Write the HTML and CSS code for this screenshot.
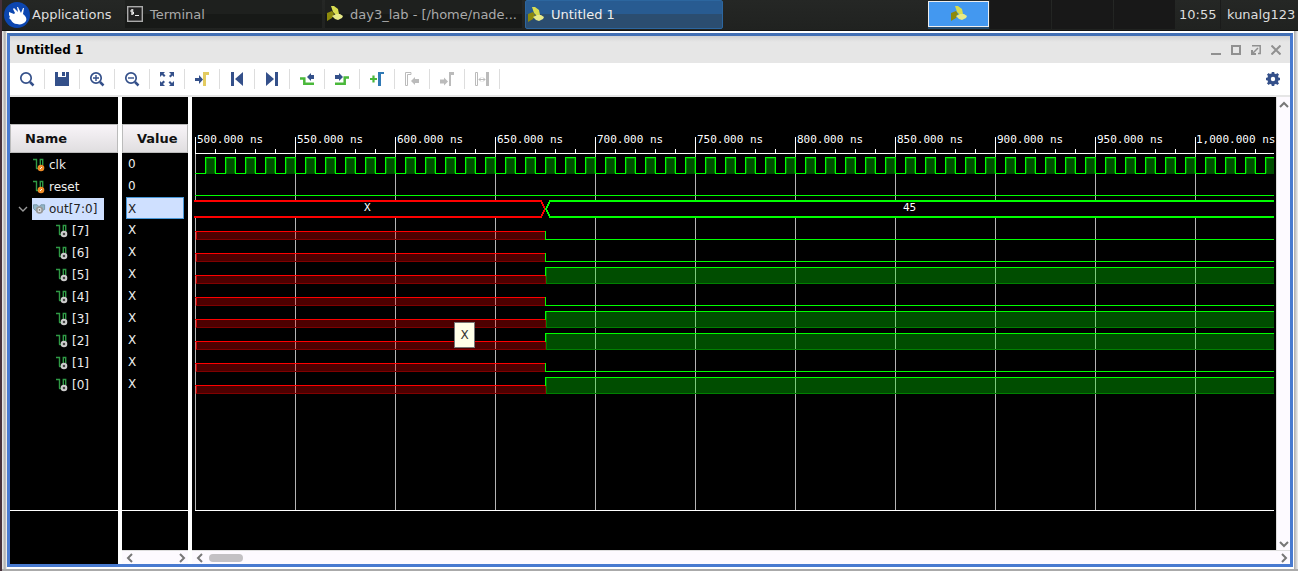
FILE: index.html
```html
<!DOCTYPE html>
<html lang="en">
<head>
<meta charset="utf-8">
<title>Untitled 1</title>
<link rel="stylesheet" href="styles.css">
</head>
<body>
<svg class="defs" aria-hidden="true">
  <symbol id="leaf" viewBox="0 0 16 16">
    <path fill="#d8dc50" d="M4 0h3l4 3 1 5-3 1-3-3z"/>
    <path fill="#8d8a0c" d="M0 7l5-2 2 3-2 4-5 3z"/>
    <path fill="#e8ea88" d="M5 10l4-2 4 0 3 2-1 2-4 2-3-1z"/>
  </symbol>
  <symbol id="bit" viewBox="0 0 12 14">
    <path fill="none" stroke="#2f9a45" stroke-width="1.400" d="M0 1.500h3.500v9M7.300 8V1.500h2.400V7"/>
    <path fill="none" stroke="#2f9a45" stroke-width="1.400" d="M3 10.500h4"/>
  </symbol>
  <symbol id="lens" viewBox="0 0 16 16">
    <circle cx="7" cy="7" r="5.200" fill="none" stroke="currentColor" stroke-width="1.700"/>
    <path d="M11 11l3.500 3.500" stroke="currentColor" stroke-width="2.500"/>
  </symbol>
</svg>

<header class="taskbar">
  <button class="apps">
    <svg class="mouse" viewBox="0 0 26 26"><circle cx="13" cy="13" r="13" fill="#0c46b0"/><path fill="#fff" d="M5 10l5 2 1-1-2-4 1-1 4 4-1-5h1l3 6 2-5h1l-1 6c3 2 4 5 3 7-2 3-6 4-9 3-3 0-5-2-6-4l-2-2 1-1-1-2z"/></svg>
    <span>Applications</span>
  </button>
  <button class="task"><svg class="term" viewBox="0 0 16 16"><rect x=".7" y=".7" width="14.600" height="14.600" fill="#222" stroke="#aaa" stroke-width="1.400"/><path d="M6.500 4H4v2h2.500v2H4M5.200 3v6M8 9.500h4" fill="none" stroke="#eee" stroke-width="1"/></svg><span>Terminal</span></button>
  <button class="task"><svg class="leaf"><use href="#leaf"/></svg><span>day3_lab - [/home/nade...</span></button>
  <button class="task current"><svg class="leaf"><use href="#leaf"/></svg><span>Untitled 1</span></button>
  <nav class="pager" aria-label="Workspaces">
    <button class="desk on" aria-label="Workspace 1"><svg class="leaf"><use href="#leaf"/></svg></button>
    <button class="desk" aria-label="Workspace 2"></button>
    <button class="desk" aria-label="Workspace 3"></button>
    <button class="desk" aria-label="Workspace 4"></button>
  </nav>
  <time class="clock">10:55</time>
  <span class="user">kunalg123</span>
</header>

<main class="frame">
  <section class="window">
    <div class="titlebar">
      <h1>Untitled 1</h1>
      <button aria-label="Minimize"><svg viewBox="0 0 10 10"><path d="M0 9h10"/></svg></button>
      <button aria-label="Maximize"><svg viewBox="0 0 10 10"><path d="M1 1h8v8H1z"/></svg></button>
      <button aria-label="Float"><svg viewBox="0 0 10 10"><path stroke-width="1.500" d="M1 .8h8.200V8.500H7M7 3L2 8"/><path stroke-width="2" d="M1 5v4h4"/></svg></button>
      <button aria-label="Close"><svg viewBox="0 0 10 10"><path d="M.5.5l9 9M9.500.5l-9 9"/></svg></button>
    </div>

    <div class="toolbar">
      <button aria-label="Find"><svg viewBox="0 0 16 16"><use href="#lens"/></svg></button>
      <button aria-label="Save"><svg viewBox="0 0 16 16"><path fill="currentColor" d="M1 1h3v5h8V1h3v14H1zM8 1h3v4H8z"/></svg></button>
      <button aria-label="Zoom in"><svg viewBox="0 0 16 16"><use href="#lens"/><path d="M4 7h6M7 4v6" stroke="currentColor" stroke-width="1.400"/></svg></button>
      <button aria-label="Zoom out"><svg viewBox="0 0 16 16"><use href="#lens"/><path d="M4 7h6" stroke="currentColor" stroke-width="1.400"/></svg></button>
      <button aria-label="Zoom fit"><svg viewBox="0 0 16 16"><path fill="currentColor" d="M1 1h5L4.500 2.500l2 2-1.500 1.500-2-2L1 6zM15 1v5l-1.500-1.500-2 2L10 5l2-2L10 1zM1 15v-5l1.500 1.500 2-2L6 11l-2 2L6 15zM15 15h-5l1.500-1.500-2-2L11 10l2 2L15 10z"/></svg></button>
      <button aria-label="Go to cursor"><svg viewBox="0 0 16 16"><path fill="#34508a" d="M1 7h4V4l4 4.500L5 13v-3H1z"/><path fill="#e3cb60" d="M9 1h6v3h-3v11H9z"/></svg></button>
      <button aria-label="Go to start"><svg viewBox="0 0 16 16"><path fill="currentColor" d="M2 1h3v14H2zM14 1v14L6 8z"/></svg></button>
      <button aria-label="Go to end"><svg viewBox="0 0 16 16"><path fill="currentColor" d="M11 1h3v14h-3zM2 1v14l8-7z"/></svg></button>
      <button aria-label="Previous transition"><svg viewBox="0 0 16 16"><path fill="none" stroke="#4ab83a" stroke-width="2.500" d="M1 7.500h4.300v5.200H15"/><path fill="#34508a" d="M15 4v4h-3v2L8 6l4-4v2z"/></svg></button>
      <button aria-label="Next transition"><svg viewBox="0 0 16 16"><path fill="none" stroke="#4ab83a" stroke-width="2.500" d="M1 12.700h9.700V6.500H15"/><path fill="#34508a" d="M1 4h4V2l4 4-4 4V8H1z"/></svg></button>
      <button aria-label="Add marker"><svg viewBox="0 0 16 16"><path stroke="#4ab83a" stroke-width="2.200" d="M1 8h7M4.500 4.500v7"/><path fill="#3079b5" d="M9 1h6v2h-3v12H9z"/></svg></button>
      <button aria-label="Previous marker" disabled><svg viewBox="0 0 16 16"><path fill="none" stroke="currentColor" d="M7 1.500H1.500v13h2V3.500H7z"/><path fill="currentColor" d="M15 8v4h-4v2l-4-4 4-4v2z"/></svg></button>
      <button aria-label="Next marker" disabled><svg viewBox="0 0 16 16"><path fill="currentColor" d="M1 8.500h4v-2l4 4-4 4v-2H1zM10 1h5v3h-3v11h-2z"/></svg></button>
      <button aria-label="Swap cursors" disabled><svg viewBox="0 0 16 16"><path fill="none" stroke="currentColor" d="M1.500 1.500h2v13h-2zM5 8.500h6M7 6.500l-2 2 2 2M9 6.500l2 2-2 2"/><path fill="currentColor" d="M12 1h3v14h-3z"/></svg></button>
      <button class="gear" aria-label="Settings"><svg viewBox="0 0 16 16"><circle cx="8" cy="8" r="4" fill="none" stroke="currentColor" stroke-width="3.600"/><path fill="none" stroke="currentColor" stroke-width="2.600" d="M8 1v2.500M8 12.500V15M1 8h2.500M12.500 8H15M2.800 2.800L5 5M11 11l2.200 2.200M13.200 2.800L11 5M5 11l-2.200 2.200"/></svg></button>
    </div>

    <div class="viewer">
      <div class="pane names">
        <table>
          <thead><tr><th>Name</th></tr></thead>
          <tbody>
            <tr><td class="signal"><svg class="bit"><use href="#bit"/><circle cx="8" cy="10" r="3.300" fill="#f08c28"/><path d="M7 11l2-2" stroke="#fff"/></svg>clk</td></tr>
            <tr><td class="signal"><svg class="bit"><use href="#bit"/><circle cx="8" cy="10" r="3.300" fill="#f08c28"/><path d="M7 11l2-2" stroke="#fff"/></svg>reset</td></tr>
            <tr><td class="bus"><button aria-label="Collapse out"><svg viewBox="0 0 10 6"><path d="M1 1l4 4 4-4" fill="none" stroke="#999" stroke-width="1.400"/></svg></button><span><svg class="busicon" viewBox="0 0 14 12"><path fill="#91b6c8" stroke="#7493a4" d="M.5 1.500h4l2 2 2-2h4v5l-2 1h-8l-2-2z"/><circle cx="7" cy="7" r="3" fill="none" stroke="#999" stroke-width="2"/><circle cx="7" cy="7" r="2" fill="#eee"/><circle cx="7" cy="7" r="1" fill="#777"/></svg>out[7:0]</span></td></tr>
            <tr><td class="member"><svg class="bit"><use href="#bit"/><circle cx="8" cy="10" r="2.300" fill="#444" stroke="#ccc" stroke-width="2"/></svg>[7]</td></tr>
            <tr><td class="member"><svg class="bit"><use href="#bit"/><circle cx="8" cy="10" r="2.300" fill="#444" stroke="#ccc" stroke-width="2"/></svg>[6]</td></tr>
            <tr><td class="member"><svg class="bit"><use href="#bit"/><circle cx="8" cy="10" r="2.300" fill="#444" stroke="#ccc" stroke-width="2"/></svg>[5]</td></tr>
            <tr><td class="member"><svg class="bit"><use href="#bit"/><circle cx="8" cy="10" r="2.300" fill="#444" stroke="#ccc" stroke-width="2"/></svg>[4]</td></tr>
            <tr><td class="member"><svg class="bit"><use href="#bit"/><circle cx="8" cy="10" r="2.300" fill="#444" stroke="#ccc" stroke-width="2"/></svg>[3]</td></tr>
            <tr><td class="member"><svg class="bit"><use href="#bit"/><circle cx="8" cy="10" r="2.300" fill="#444" stroke="#ccc" stroke-width="2"/></svg>[2]</td></tr>
            <tr><td class="member"><svg class="bit"><use href="#bit"/><circle cx="8" cy="10" r="2.300" fill="#444" stroke="#ccc" stroke-width="2"/></svg>[1]</td></tr>
            <tr><td class="member"><svg class="bit"><use href="#bit"/><circle cx="8" cy="10" r="2.300" fill="#444" stroke="#ccc" stroke-width="2"/></svg>[0]</td></tr>
          </tbody>
        </table>
        <div class="rest"></div>
        <div class="foot"></div>
      </div>

      <div class="pane values">
        <table>
          <thead><tr><th>Value</th></tr></thead>
          <tbody>
            <tr><td>0</td></tr>
            <tr><td>0</td></tr>
            <tr><td class="chosen"><span>X</span></td></tr>
            <tr><td>X</td></tr>
            <tr><td>X</td></tr>
            <tr><td>X</td></tr>
            <tr><td>X</td></tr>
            <tr><td>X</td></tr>
            <tr><td>X</td></tr>
            <tr><td>X</td></tr>
            <tr><td>X</td></tr>
          </tbody>
        </table>
        <div class="rest"></div>
        <div class="foot"></div>
        <div class="hscroll">
          <button aria-label="Scroll left"><svg viewBox="0 0 8 10"><path d="M6 1L2 5l4 4"/></svg></button>
          <button aria-label="Scroll right"><svg viewBox="0 0 8 10"><path d="M2 1l4 4-4 4"/></svg></button>
        </div>
      </div>

      <div class="waves">
        <div class="plot">
          <svg class="canvas" role="img" aria-label="Waveform">
            <defs>
              <pattern id="minor" x="3" y="52" width="20" height="5" patternUnits="userSpaceOnUse"><rect width="1" height="5" fill="#fff"/></pattern>
              <pattern id="grid" x="3" y="0" width="100" height="9" patternUnits="userSpaceOnUse"><rect width="1" height="9" fill="#b4b4b4"/></pattern>
              <pattern id="major" x="3" y="0" width="100" height="9" patternUnits="userSpaceOnUse"><rect width="1" height="9" fill="#fff"/></pattern>
              <pattern id="clock" x="13" y="60" width="20" height="17" patternUnits="userSpaceOnUse">
                <rect width="11" height="17" fill="#0f0" fill-opacity=".3"/>
                <path fill="#008000" d="M1 1h9v1H2v14H1zM9 2h1v14H9z"/>
                <path fill="#0f0" d="M0 0h11v16h9v1H10V1H1v16H0z"/>
              </pattern>
              <g id="unknown">
                <rect x="3" y="0" width="351" height="9" fill="#f00" fill-opacity=".3"/>
                <path fill="#800000" d="M4 8h350v1H4zM353 1h1v8h-1z"/>
                <path fill="#d00000" d="M4 1h1v7H4z"/>
                <path fill="#f00" d="M3 0h351v1H3z"/>
              </g>
              <g id="low">
                <use href="#unknown" y="8"/>
                <rect x="353" y="8" width="1" height="9" fill="#0f0"/>
                <rect x="353" y="16" width="100%" height="1" fill="#0f0"/>
              </g>
              <g id="high">
                <use href="#unknown" y="8"/>
                <rect x="354" y="0" width="100%" height="17" fill="#0f0" fill-opacity=".3"/>
                <rect x="354" y="16" width="100%" height="1" fill="#008000"/>
                <rect x="354" y="1" width="1" height="16" fill="#008000"/>
                <rect x="353" y="0" width="100%" height="1" fill="#0f0"/>
                <rect x="353" y="0" width="1" height="9" fill="#0f0"/>
              </g>
            </defs>
            <svg class="traces">
              <rect x="3" y="40" width="100%" height="17" fill="url(#major)"/>
              <rect x="3" y="52" width="100%" height="5" fill="url(#minor)"/>
              <rect x="3" y="57" width="100%" height="100%" fill="url(#grid)"/>
              <rect x="3" y="56" width="100%" height="1" fill="#fff"/>
              <rect class="base" x="3" y="100%" width="100%" height="1" fill="#fff"/>
              <rect x="3" y="76" width="10" height="1" fill="#0f0"/>
              <rect x="13" y="60" width="100%" height="17" fill="url(#clock)"/>
              <rect x="3" y="98" width="100%" height="1" fill="#0f0"/>
              <rect x="2" y="103" width="100%" height="18" fill="#000"/>
              <path fill="none" stroke="#f00" stroke-width="2" d="M2 104h347l4 8-4 8H2"/>
              <path fill="none" stroke="#0f0" stroke-width="2" d="M5000 104H358l-4 8 4 8h4642"/>
              <use href="#low" y="126"/>
              <use href="#low" y="148"/>
              <use href="#high" y="170"/>
              <use href="#low" y="192"/>
              <use href="#high" y="214"/>
              <use href="#high" y="236"/>
              <use href="#low" y="258"/>
              <use href="#high" y="280"/>
            </svg>
            <g class="labels">
              <text x="5" y="46">500.000 ns</text>
              <text x="105" y="46">550.000 ns</text>
              <text x="205" y="46">600.000 ns</text>
              <text x="305" y="46">650.000 ns</text>
              <text x="405" y="46">700.000 ns</text>
              <text x="505" y="46">750.000 ns</text>
              <text x="605" y="46">800.000 ns</text>
              <text x="705" y="46">850.000 ns</text>
              <text x="805" y="46">900.000 ns</text>
              <text x="905" y="46">950.000 ns</text>
              <text x="1004" y="46">1,000.000 ns</text>
              <text x="172" y="114">X</text>
              <text x="711" y="114">45</text>
            </g>
          </svg>
          <div class="tip" role="tooltip">X</div>
        </div>
        <div class="vscroll">
          <button aria-label="Scroll up"><svg viewBox="0 0 10 8"><path d="M1 6l4-4 4 4"/></svg></button>
          <button aria-label="Scroll down"><svg viewBox="0 0 10 8"><path d="M1 2l4 4 4-4"/></svg></button>
        </div>
        <div class="hscroll wide">
          <button aria-label="Scroll left"><svg viewBox="0 0 8 10"><path d="M6 1L2 5l4 4"/></svg></button>
          <div class="thumb"></div>
          <button aria-label="Scroll right"><svg viewBox="0 0 8 10"><path d="M2 1l4 4-4 4"/></svg></button>
        </div>
      </div>
    </div>
  </section>
</main>
</body>
</html>
```
FILE: styles.css
```css
* { box-sizing: border-box; }

body {
  margin: 0;
  min-height: 100vh;
  display: flex;
  flex-direction: column;
  padding-right: 3px;
  border-left: 2px solid #46303a;
  background: #fff;
  font-family: "DejaVu Sans", sans-serif;
  font-size: 12px;
}

button {
  margin: 0;
  padding: 0;
  border: 0;
  background: none;
  color: inherit;
  font: inherit;
}

svg { display: block; flex: none; }
.defs { position: absolute; width: 0; height: 0; }

.taskbar {
  display: flex;
  height: 31px;
  align-items: flex-start;
  background: linear-gradient(#252725, #202220);
  border-bottom: 1px solid #111;
  color: #dedede;
  font-size: 13px;
  white-space: nowrap;
}
.apps { display: flex; align-items: center; gap: 2px; width: 123px; height: 29px; padding-left: 2px; }
.mouse { width: 26px; height: 26px; }
.task {
  display: flex;
  align-items: center;
  gap: 7px;
  flex: 0 1 197px;
  min-width: 0;
  height: 28px;
  margin-right: 3px;
  padding-left: 2px;
  overflow: hidden;
  background: linear-gradient(#1e201e 50%, #171917 50%);
  color: #aaa;
}
.task.current {
  flex-basis: 198px;
  height: 29px;
  border: 1px solid #2c669f;
  border-radius: 2px;
  background: linear-gradient(#285b91 50%, #2b4d70 50%);
  color: #eee;
}
.term { width: 16px; height: 16px; }
.leaf { width: 16px; height: 16px; }
.pager { display: flex; gap: 1px; margin-left: auto; }
.desk { width: 61px; height: 29px; background: #181818; }
.desk.on {
  display: flex;
  align-items: center;
  justify-content: center;
  height: 26px;
  margin-top: 1px;
  border: 1px solid #eee;
  background: #4398f0;
  box-shadow: 0 2px #234b70;
}
.clock { width: 46px; padding-left: 4px; line-height: 29px; border-right: 1px solid #1a1b1a; }
.user { width: 77px; padding-left: 6px; line-height: 29px; }

.frame {
  flex: 1;
  display: flex;
  padding: 2px 5px;
  background: linear-gradient(90deg, #eee, #aaa 3px, #fff 5px, #fff calc(100% - 4px), #aaa calc(100% - 4px), #eee);
  border-bottom: 2px solid #aaa;
}
.window {
  flex: 1;
  min-width: 0;
  display: flex;
  flex-direction: column;
  border: 3px solid #487ad0;
  border-top-color: #426fb4;
  background: #fff;
}
.titlebar {
  display: flex;
  align-items: center;
  gap: 10px;
  height: 27px;
  padding: 0 9px 0 6px;
  background: linear-gradient(#d3d3d5, #e6e6e6 6px);
}
.titlebar h1 { flex: 1; margin: 0; font-size: 12px; line-height: 26px; }
.titlebar svg { width: 10px; height: 10px; fill: none; stroke: #909090; stroke-width: 2px; }

.toolbar {
  display: flex;
  align-items: center;
  height: 34px;
  border-bottom: 2px solid #e6e6e6;
  color: #34508a;
}
.toolbar button { width: 35px; height: 20px; padding-left: 9px; border-right: 1px solid #ddd; }
.toolbar button:disabled { color: #bbb; }
.toolbar svg { width: 16px; height: 16px; }
.toolbar .gear { width: 34px; margin-left: auto; border: 0; }

.viewer { flex: 1; display: flex; gap: 4px; min-height: 0; background: #fff; }
.pane { display: flex; flex-direction: column; padding-top: 27px; background: #000; color: #eee; }
.names { width: 108px; }
.values { width: 66px; }
.pane table { width: 100%; border-spacing: 0; }
.pane th {
  height: 29px;
  padding: 0 0 0 14px;
  border: 1px solid #bbb;
  background: linear-gradient(#f8f4f8, #e0dee0);
  color: #111;
  font-size: 13px;
  text-align: left;
}
.pane td { height: 22px; padding: 0; line-height: 24px; }
.names tr { display: block; }
.names th, .names td { display: flex; align-items: center; }
.names td.signal { padding-left: 23px; }
.names td.member { padding-left: 46px; }
.names td { height: 22px; line-height: 22px; padding-top: 1px; }
.bit { width: 12px; height: 14px; margin-right: 4px; }
.bit use { width: 12px; height: 14px; }
.names td.bus { padding-left: 8px; gap: 4px; }
.bus button { width: 10px; height: 6px; }
.bus button svg { width: 10px; height: 6px; }
.bus span { display: flex; align-items: center; gap: 3px; width: 72px; padding-left: 1px; background: #cfe0ff; color: #222; }
.busicon { width: 13px; height: 12px; }
.values table { height: 271px; }
.values td { padding-left: 6px; line-height: 22px; padding-top: 1px; height: 22px; }
.values td.chosen { padding: 0 4px; }
.chosen span { display: block; height: 22px; padding-left: 1px; line-height: 22px; border: 1px solid #4898d8; background: #cfe0ff; color: #222; }
.values td { line-height: 21px; }
.rest { flex: 1; min-height: 20px; border-bottom: 1px solid #fff; }
.foot { height: 53px; }
.values .foot { height: 39px; }

.waves { flex: 1; min-width: 0; display: grid; grid-template-columns: 1fr 14px; grid-template-rows: 1fr 14px; }
.plot { position: relative; overflow: hidden; background: #000; }
.canvas { width: 100%; height: 100%; min-height: 340px; shape-rendering: crispEdges; }
.traces { width: calc(100% - 2px); height: calc(100% - 39px); }
.base { transform: translateY(-1px); }
.labels { fill: #fff; font: 11px "DejaVu Sans Mono", monospace; }
.tip {
  position: absolute;
  left: 262px;
  top: 225px;
  width: 21px;
  height: 26px;
  border: 1px solid #777;
  background: #ffffe8;
  color: #333;
  line-height: 24px;
  text-align: center;
}

.hscroll, .vscroll { display: flex; justify-content: space-between; background: #fdfaff; }
.hscroll { height: 14px; align-items: center; padding: 0 2px 0 4px; border-top: 1px solid #ddd; }
.hscroll.wide { grid-column: 1 / 3; }
.vscroll { flex-direction: column; align-items: center; padding: 4px 0 2px; border-left: 1px solid #ddd; }
.hscroll svg { width: 8px; height: 10px; }
.vscroll svg { width: 10px; height: 8px; }
.hscroll svg, .vscroll svg { fill: none; stroke: #777; stroke-width: 2px; }
.thumb { width: 34px; height: 8px; margin: 0 auto 0 5px; border-radius: 4px; background: #c3c1c4; }
```
